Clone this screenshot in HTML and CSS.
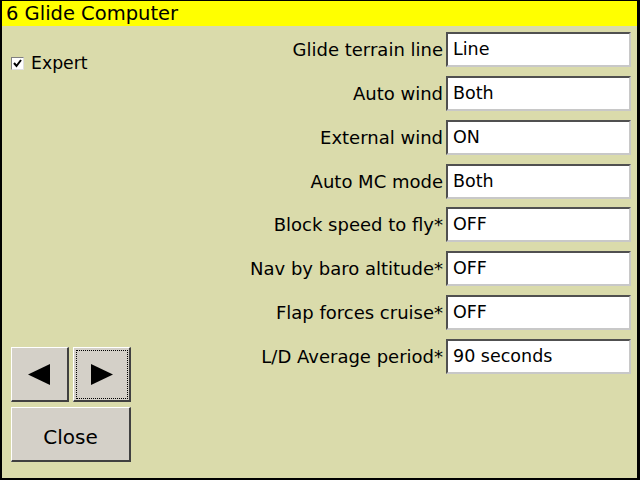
FILE: index.html
```html
<!DOCTYPE html>
<html>
<head>
<meta charset="utf-8">
<link rel="stylesheet" href="styles.css">
</head>
<body>
<div class="dialog">
  <div class="title">6 Glide Computer</div>
  <div class="content">
    <div class="left">
      <label class="check">
        <span class="box"><svg width="9" height="9" viewBox="0 0 9 9"><path d="M1 4 L3.5 7 L8 1" fill="none" stroke="#000" stroke-width="2"/></svg></span>
        <span>Expert</span>
      </label>
      <div class="buttons">
        <button class="btn"><svg width="23" height="21" viewBox="0 0 23 21"><polygon points="0,10.5 22,0 22,21" fill="#000"/></svg></button>
        <button class="btn focus"><svg width="23" height="21" viewBox="0 0 23 21"><polygon points="1,0 23,10.5 1,21" fill="#000"/></svg></button>
        <button class="btn wide">Close</button>
      </div>
    </div>
    <div class="form">
      <div class="row"><span class="label">Glide terrain line</span><span class="field">Line</span></div>
      <div class="row"><span class="label">Auto wind</span><span class="field">Both</span></div>
      <div class="row"><span class="label">External wind</span><span class="field">ON</span></div>
      <div class="row"><span class="label">Auto MC mode</span><span class="field">Both</span></div>
      <div class="row"><span class="label">Block speed to fly*</span><span class="field">OFF</span></div>
      <div class="row"><span class="label">Nav by baro altitude*</span><span class="field">OFF</span></div>
      <div class="row"><span class="label">Flap forces cruise*</span><span class="field">OFF</span></div>
      <div class="row"><span class="label">L/D Average period*</span><span class="field">90 seconds</span></div>
    </div>
  </div>
</div>
</body>
</html>
```

FILE: styles.css
```css
html, body {
  margin: 0;
  padding: 0;
  background: #000;
}
body {
  font-family: "DejaVu Sans", sans-serif;
  color: #000;
}
.dialog {
  box-sizing: border-box;
  width: 640px;
  height: 480px;
  border-style: solid;
  border-color: #000;
  border-width: 1px 3px 2px 2px;
  background: #dadbab;
  display: flex;
  flex-direction: column;
}
.title {
  height: 25px;
  background: #ffff00;
  font-size: 19.5px;
  line-height: 25px;
  padding-left: 4px;
  white-space: nowrap;
}
.content {
  flex: 1;
  display: flex;
  justify-content: space-between;
}
.left {
  display: flex;
  flex-direction: column;
  padding: 30px 0 16px 9px;
}
.check {
  display: flex;
  align-items: center;
  gap: 7px;
  font-size: 17.3px;
  height: 14px;
}
.box {
  box-sizing: border-box;
  width: 13px;
  height: 13px;
  background: #fff;
  border: 1px solid;
  border-color: #808080 #e0e0e0 #e0e0e0 #808080;
  display: flex;
  align-items: center;
  justify-content: center;
}
.buttons {
  margin-top: auto;
  display: grid;
  grid-template-columns: 58px 58px;
  grid-template-rows: 55px 55px;
  column-gap: 4px;
  row-gap: 5px;
}
.btn {
  box-sizing: border-box;
  margin: 0;
  padding: 0;
  background: #d4d0c8;
  border-style: solid;
  border-width: 1px 2px 2px 1px;
  border-color: #ffffff #404040 #404040 #ffffff;
  display: flex;
  align-items: center;
  justify-content: center;
  font-family: "DejaVu Sans", sans-serif;
  font-size: 20px;
  color: #000;
  position: relative;
}
.btn.wide {
  grid-column: 1 / 3;
  padding-top: 5px;
}
.focus::after {
  content: "";
  position: absolute;
  left: 2px;
  top: 2px;
  right: 1px;
  bottom: 1px;
  border: 1px dotted #000;
}
.form {
  display: flex;
  flex-direction: column;
  gap: 8.86px;
  padding: 6px 6px 0 0;
}
.row {
  display: flex;
  align-items: center;
  justify-content: flex-end;
  height: 35px;
  gap: 3px;
}
.label {
  font-size: 18px;
  white-space: nowrap;
}
.field {
  box-sizing: border-box;
  width: 185px;
  height: 35px;
  background: #fff;
  border-style: solid;
  border-width: 2px;
  border-color: #505050 #c8c8c8 #c8c8c8 #505050;
  font-size: 17.5px;
  line-height: 31px;
  padding-left: 5px;
  white-space: nowrap;
}
```
